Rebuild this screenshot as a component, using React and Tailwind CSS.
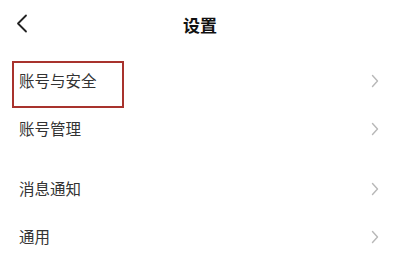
const rows = [
  [{ label: "账号与安全", marked: true }, { label: "账号管理" }],
  [{ label: "消息通知" }, { label: "通用" }],
];

function Chevron() {
  return (
    <svg width="8" height="14" viewBox="0 0 8 14" className="shrink-0">
      <polyline points="1.5,1.5 6.5,7 1.5,12.5" fill="none" stroke="#b8b8b8" strokeWidth="1.4" strokeLinecap="round" strokeLinejoin="round" />
    </svg>
  );
}

export default function App() {
  return (
    <div
      className="w-[400px] h-[263px] bg-white overflow-hidden text-[#333]"
      style={{ fontFamily: '"Noto Sans CJK SC", "Noto Sans", sans-serif' }}
    >
      {/* Header */}
      <div className="relative h-[50px] flex items-center justify-center">
        <svg width="14" height="20" viewBox="0 0 14 20" className="absolute left-[15px] top-[14px]">
          <polyline points="11,1.5 3,9.5 11,17.5" fill="none" stroke="#222" strokeWidth="1.8" strokeLinecap="round" strokeLinejoin="round" />
        </svg>
        <h1 className="text-[17px] font-bold text-[#111]">设置</h1>
      </div>

      <div className="mt-[7px] flex flex-col gap-[12px]">
        {rows.map((group, gi) => (
          <div key={gi} className="flex flex-col">
            {group.map((item) => (
              <div key={item.label} className="relative h-12 flex items-center justify-between pl-[19px] pr-[21px]">
                <span className="text-[15.5px]">{item.label}</span>
                <Chevron />
                {item.marked && (
                  <div className="absolute left-[12px] top-[4px] w-[112px] h-[47px] border-2 border-[#a8322d]" />
                )}
              </div>
            ))}
          </div>
        ))}
      </div>
    </div>
  );
}
